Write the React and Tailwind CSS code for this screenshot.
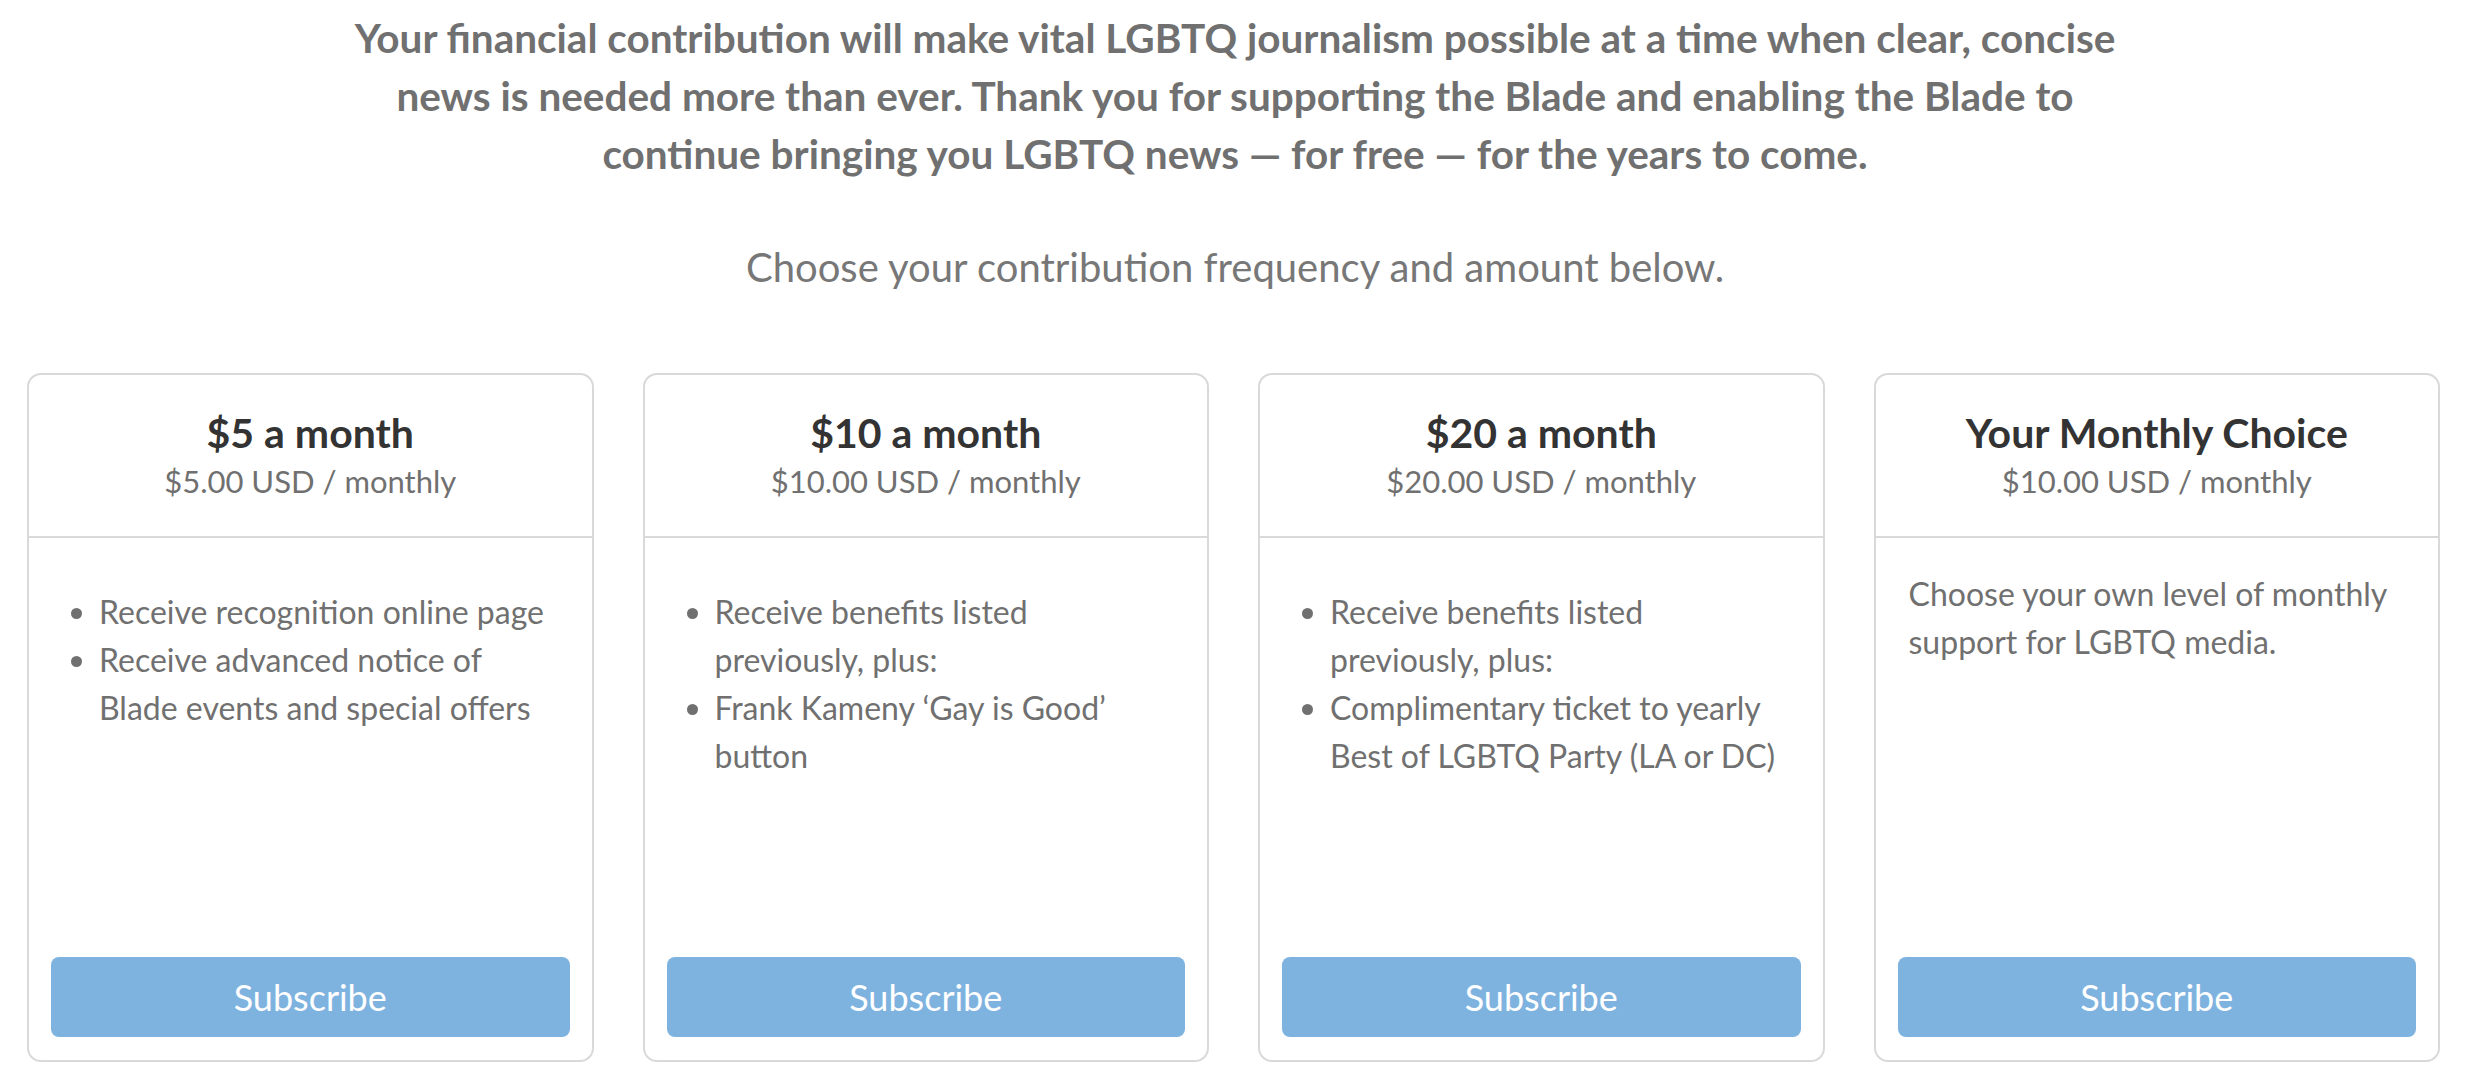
import React from "react";

const plans = [
  {
    title: "$5 a month",
    price: "$5.00 USD / monthly",
    items: [["Receive recognition online page"], ["Receive advanced notice of", "Blade events and special offers"]],
  },
  {
    title: "$10 a month",
    price: "$10.00 USD / monthly",
    items: [["Receive benefits listed", "previously, plus:"], ["Frank Kameny ‘Gay is Good’", "button"]],
  },
  {
    title: "$20 a month",
    price: "$20.00 USD / monthly",
    items: [["Receive benefits listed", "previously, plus:"], ["Complimentary ticket to yearly", "Best of LGBTQ Party (LA or DC)"]],
  },
  {
    title: "Your Monthly Choice",
    price: "$10.00 USD / monthly",
    text: ["Choose your own level of monthly", "support for LGBTQ media."],
  },
];

function Card({ plan }) {
  return (
    <div className="flex h-[689px] flex-col rounded-[14px] border-2 border-[#d9d9d9] bg-white">
      <div className="border-b-2 border-[#d9d9d9] px-4 pb-[31px] pt-[34px] text-center">
        <div className="whitespace-nowrap text-[41px] font-bold leading-[48px] text-[#333333]">{plan.title}</div>
        <div className="whitespace-nowrap text-[31px] leading-[48px] text-[#707070]">{plan.price}</div>
      </div>
      <div className="flex flex-1 flex-col px-[33px] pt-[32px] text-[32px] leading-[48px] text-[#707070]">
        {plan.items ? (
          <ul className="mt-[18px] list-disc pl-[37px] marker:text-[#707070]">
            {plan.items.map((lines, i) => (
              <li key={i} className="whitespace-nowrap">
                {lines.map((l, j) => (
                  <React.Fragment key={j}>
                    {j > 0 && <br />}
                    {l}
                  </React.Fragment>
                ))}
              </li>
            ))}
          </ul>
        ) : (
          <p className="whitespace-nowrap">
            {plan.text[0]}
            <br />
            {plan.text[1]}
          </p>
        )}
      </div>
      <div className="px-[22px] pb-[23px]">
        <button className="flex h-[80px] w-full items-center justify-center rounded-[8px] bg-[#7eb3e0] text-[36px] text-white">
          Subscribe
        </button>
      </div>
    </div>
  );
}

export default function App() {
  return (
    <div
      className="min-h-[1086px] w-full bg-white"
      style={{ fontFamily: "Lato, 'Open Sans', sans-serif" }}
    >
      <div className="pt-[9px] text-center text-[40.5px] font-bold leading-[58px] text-[#707070]">
        Your financial contribution will make vital LGBTQ journalism possible at a time when clear, concise
        <br />
        news is needed more than ever. Thank you for supporting the Blade and enabling the Blade to
        <br />
        continue bringing you LGBTQ news — for free — for the years to come.
      </div>
      <div className="mt-[60px] text-center text-[40px] leading-[48px] text-[#777777]">
        Choose your contribution frequency and amount below.
      </div>
      <div className="mt-[82px] grid grid-cols-4 gap-[49px] pl-[27px] pr-[30px]">
        {plans.map((p) => (
          <Card key={p.title} plan={p} />
        ))}
      </div>
    </div>
  );
}
